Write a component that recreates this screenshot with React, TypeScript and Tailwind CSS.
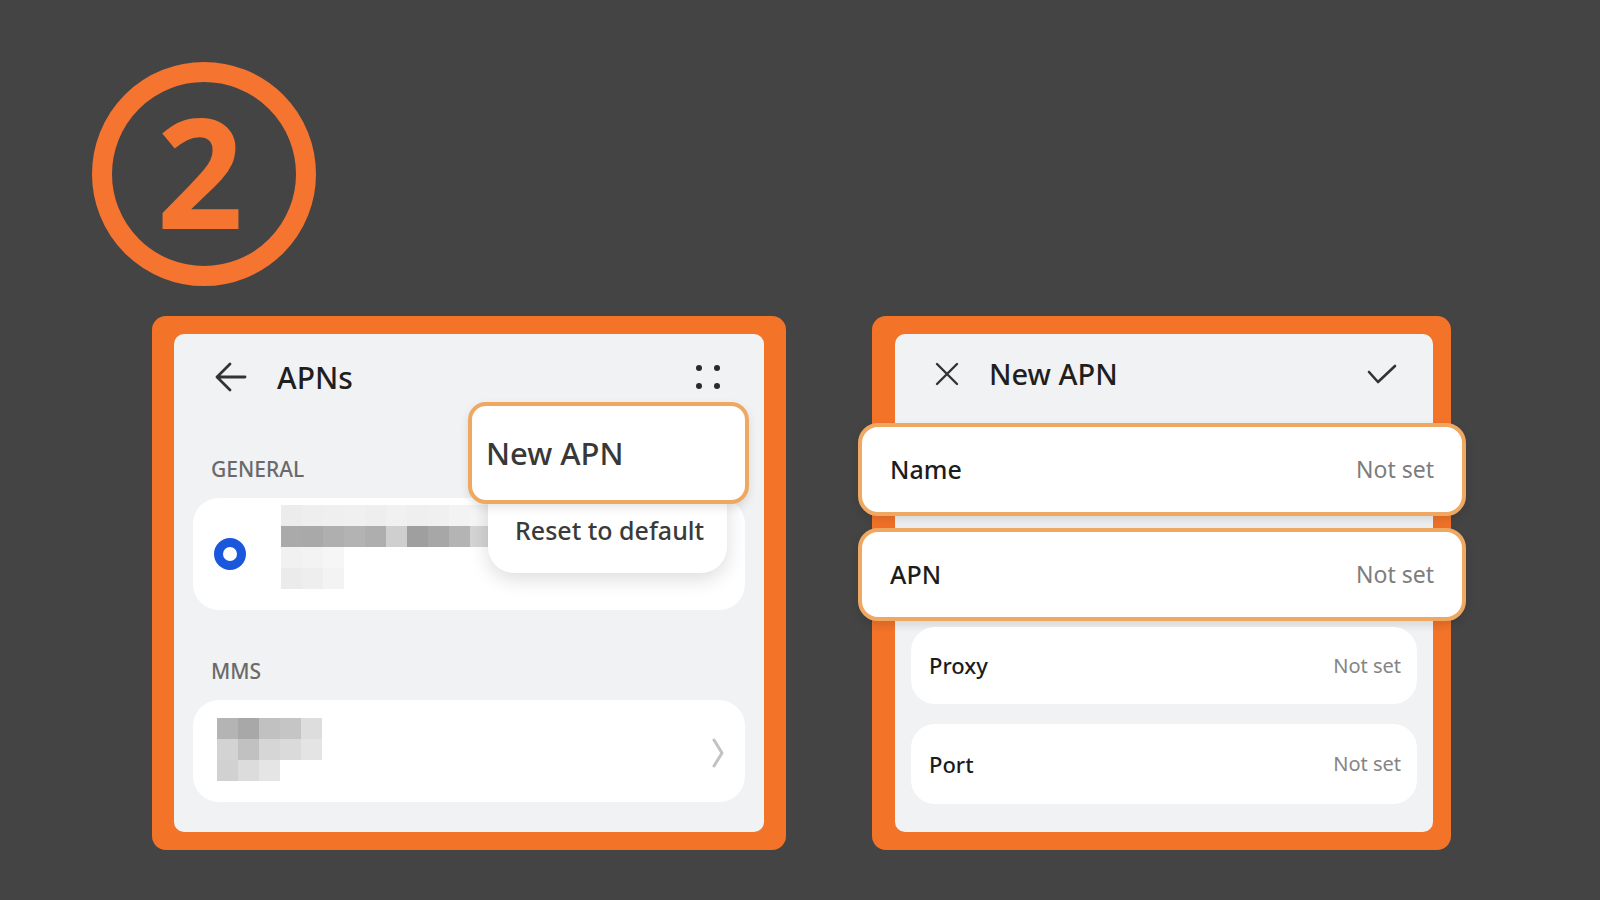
import React from "react";

const generalBlocks: string[][] = [
  ["bg-[#ececec]", "bg-[#eeeeee]", "bg-[#efefef]", "bg-[#f0f0f0]", "bg-[#eeeeee]", "bg-[#f1f1f1]", "bg-[#efefef]", "bg-[#f0f0f0]", "bg-[#f3f3f3]", "bg-[#f6f6f6]"],
  ["bg-[#aaaaaa]", "bg-[#a9a9a9]", "bg-[#afafaf]", "bg-[#b3b3b3]", "bg-[#aeaeae]", "bg-[#cfcfcf]", "bg-[#9f9f9f]", "bg-[#a7a7a7]", "bg-[#b4b4b4]", "bg-[#d4d4d4]"],
  ["bg-[#f1f1f1]", "bg-[#f3f3f3]", "bg-[#f6f6f6]"],
  ["bg-[#ebebeb]", "bg-[#eeeeee]", "bg-[#f3f3f3]"],
];

const mmsBlocks: string[][] = [
  ["bg-[#b4b4b4]", "bg-[#a8a8a8]", "bg-[#c1c1c1]", "bg-[#c5c5c5]", "bg-[#dddddd]"],
  ["bg-[#d3d3d3]", "bg-[#c1c1c1]", "bg-[#d6d6d6]", "bg-[#dadada]", "bg-[#e4e4e4]"],
  ["bg-[#d1d1d1]", "bg-[#dcdcdc]", "bg-[#e5e5e5]"],
];

// pixelated (censored) operator names
function Pixels({ rows }: { rows: string[][] }) {
  return (
    <div className="flex flex-col">
      {rows.map((row, i) => (
        <div key={i} className="flex">
          {row.map((c, j) => (
            <div key={j} className={`w-[21px] h-[21px] ${c}`} />
          ))}
        </div>
      ))}
    </div>
  );
}

function Field({ label, big }: { label: string; big?: boolean }) {
  if (big) {
    return (
      <div className="h-[93px] -ml-[37px] -mr-[33px] bg-white border-[4px] border-[#eea862] rounded-[20px] shadow-[0_4px_10px_rgba(0,0,0,0.12)] flex items-center justify-between pl-[28px] pr-[28px]">
        <span className="text-[25px] font-medium text-[#1c1c1c]">{label}</span>
        <span className="text-[23px] text-[#7d7d7d]">Not set</span>
      </div>
    );
  }
  return (
    <div className="mx-[16px] bg-white rounded-[24px] flex items-center justify-between pl-[18px] pr-[16px] h-full">
      <span className="text-[22px] font-medium text-[#1c1c1c]">{label}</span>
      <span className="text-[20px] text-[#858585]">Not set</span>
    </div>
  );
}

export default function App() {
  return (
    <div className="w-[1600px] h-[900px] bg-[#444444] overflow-hidden" style={{ fontFamily: '"Noto Sans", "Liberation Sans", sans-serif' }}>
      {/* step badge */}
      <div className="pt-[62px] pl-[92px]">
        <div className="w-[224px] h-[224px] rounded-full border-[20px] border-[#f47430] flex items-center justify-center">
          <span className="text-[152px] leading-none font-bold text-[#f47430] mb-[6px] mr-[8px]">2</span>
        </div>
      </div>

      <div className="flex gap-[86px] mt-[30px] ml-[152px]">
        {/* APNs screen */}
        <div className="w-[634px] h-[534px] bg-[#f37329] rounded-[14px] px-[22px] py-[18px]">
          <div className="relative h-full bg-[#f1f2f4] rounded-[10px]">
            <div className="h-[86px] flex items-center pl-[41px] pr-[44px]">
              <svg width="32" height="30" viewBox="0 0 32 30" fill="none" stroke="#333" strokeWidth="2.8" strokeLinecap="round" strokeLinejoin="round">
                <path d="M30 15H2M15 2L2 15L15 28" />
              </svg>
              <span className="ml-[30px] text-[30px] font-medium text-[#1f1f1f]">APNs</span>
              <div className="ml-auto grid grid-cols-2 gap-[12px]">
                <div className="w-[6px] h-[6px] rounded-full bg-[#2a2a2a]" />
                <div className="w-[6px] h-[6px] rounded-full bg-[#2a2a2a]" />
                <div className="w-[6px] h-[6px] rounded-full bg-[#2a2a2a]" />
                <div className="w-[6px] h-[6px] rounded-full bg-[#2a2a2a]" />
              </div>
            </div>

            <div className="h-[78px] pt-[22px] flex items-center pl-[37px] text-[21px] font-medium text-[#6a6a6a]">GENERAL</div>
            <div className="mx-[19px] h-[112px] bg-white rounded-[26px] flex items-start">
              <div className="ml-[21px] mt-[40px] w-[32px] h-[32px] rounded-full border-[9px] border-[#1a57dd]" />
              <div className="ml-[35px] mt-[7px]">
                <Pixels rows={generalBlocks} />
              </div>
            </div>

            <div className="h-[90px] pt-[34px] flex items-center pl-[37px] text-[21px] font-medium text-[#6a6a6a]">MMS</div>
            <div className="mx-[19px] h-[102px] bg-white rounded-[26px] flex items-start">
              <div className="ml-[24px] mt-[18px]">
                <Pixels rows={mmsBlocks} />
              </div>
              <svg className="ml-auto mr-[21px] mt-[38px]" width="12" height="30" viewBox="0 0 12 30" fill="none" stroke="#c2c2c2" strokeWidth="3" strokeLinecap="round" strokeLinejoin="round">
                <path d="M2 2L10 15L2 28" />
              </svg>
            </div>

            {/* overflow menu */}
            <div className="absolute left-[314px] top-[80px] w-[239px] h-[159px] bg-white rounded-[26px] shadow-[0_6px_20px_rgba(0,0,0,0.14)] pt-[101px] pl-[27px]">
              <span className="block text-[25px] leading-[30px] font-medium text-[#3a3a3a]">Reset to default</span>
            </div>
            <div className="absolute left-[294px] top-[68px] w-[281px] h-[102px] bg-white border-[4px] border-[#eea862] rounded-[18px] shadow-[0_4px_10px_rgba(0,0,0,0.1)] flex items-center pl-[14px]">
              <span className="text-[31px] font-medium text-[#383838]">New APN</span>
            </div>
          </div>
        </div>

        {/* New APN screen */}
        <div className="w-[579px] h-[534px] bg-[#f37329] rounded-[14px] pl-[23px] pr-[18px] py-[18px]">
          <div className="h-full bg-[#f1f2f4] rounded-[10px] flex flex-col">
            <div className="h-[80px] shrink-0 flex items-center pl-[40px] pr-[36px]">
              <svg width="24" height="24" viewBox="0 0 24 24" fill="none" stroke="#333" strokeWidth="2.4" strokeLinecap="round">
                <path d="M2 2L22 22M22 2L2 22" />
              </svg>
              <span className="ml-[30px] text-[29px] font-medium text-[#1f1f1f]">New APN</span>
              <svg className="ml-auto" width="30" height="20" viewBox="0 0 30 20" fill="none" stroke="#333" strokeWidth="2.6" strokeLinecap="round" strokeLinejoin="round">
                <path d="M2 8L11 18L28 2" />
              </svg>
            </div>
            <div className="mt-[9px]">
              <Field label="Name" big />
            </div>
            <div className="mt-[12px]">
              <Field label="APN" big />
            </div>
            <div className="mt-[6px] h-[77px]">
              <Field label="Proxy" />
            </div>
            <div className="mt-[20px] h-[80px]">
              <Field label="Port" />
            </div>
          </div>
        </div>
      </div>
    </div>
  );
}
